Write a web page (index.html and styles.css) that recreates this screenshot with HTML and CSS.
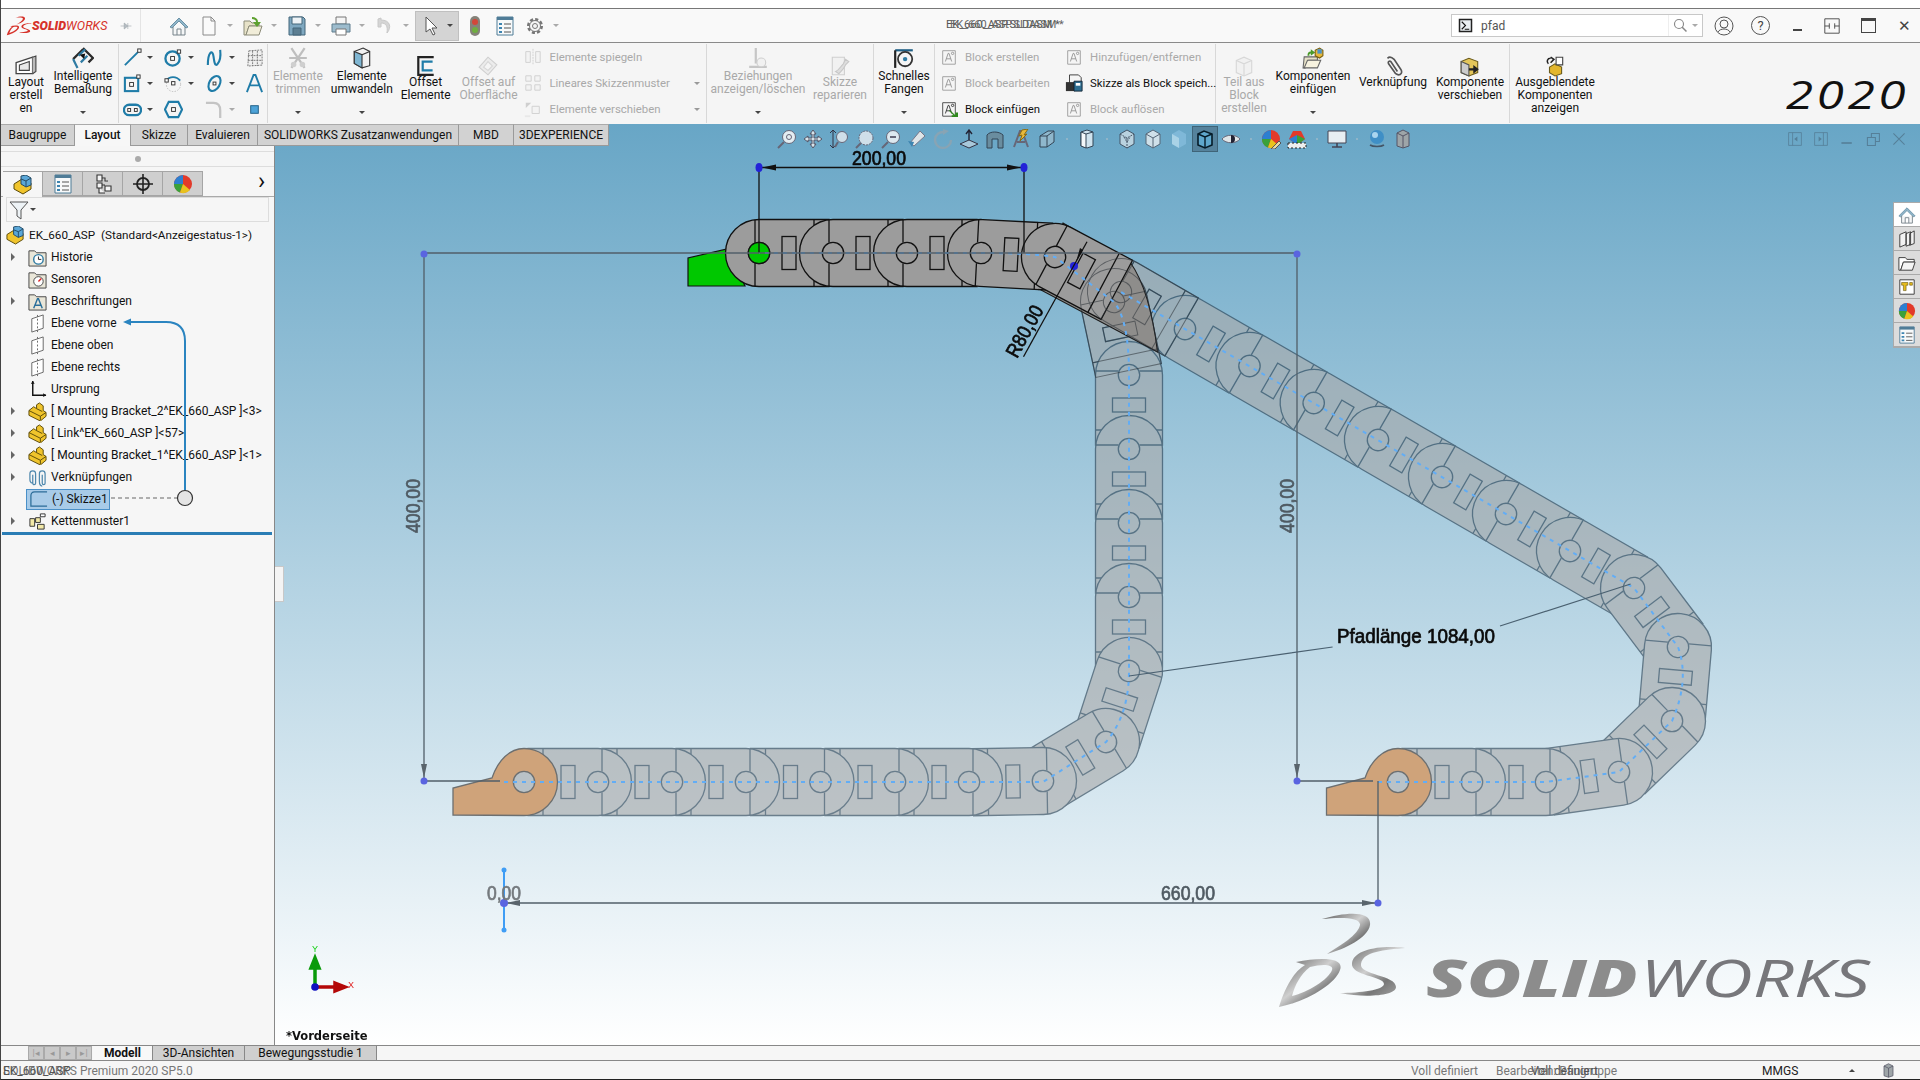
FILE: index.html
```html
<!DOCTYPE html>
<html lang="de">
<head>
    <meta charset="UTF-8">
    <title>SOLIDWORKS Premium 2020 - EK_660_ASP</title>
    <link rel="stylesheet" href="styles.css">
</head>
<body>
    <!-- icon library -->
    <svg class="defs" width="0" height="0">
        <defs>
            <linearGradient id="chrome" x1="0" y1="0" x2="1" y2="1">
                <stop offset="0" stop-color="#5a5a5a"/>
                <stop offset=".45" stop-color="#cfcfcf"/>
                <stop offset=".7" stop-color="#777"/>
                <stop offset="1" stop-color="#aaa"/>
            </linearGradient>
            <symbol id="ds" viewBox="1275 912 135 98">
                <path d="M1322 919C1345 912 1372 910 1370 925C1368 938 1345 949 1327 954C1341 945 1358 935 1360 925C1361 917 1340 917 1322 919Z"/>
                <path fill-rule="evenodd" d="M1296 962C1320 957 1345 957 1340 970C1335 985 1305 1002 1279 1007C1284 990 1293 972 1305 965C1302 964 1299 963 1296 962ZM1310 967C1300 975 1295 985 1292 996C1308 992 1328 980 1332 970C1334 964 1322 964 1310 967Z"/>
                <path d="M1405 948C1385 950 1363 951 1361 964C1359 975 1396 975 1396 987C1396 996 1365 998 1340 993C1360 993 1384 990 1384 984C1384 976 1350 976 1352 963C1354 948 1385 945 1405 948Z"/>
            </symbol>
            <symbol id="i-pin" viewBox="0 0 20 20"><path d="M1 10h6M7 5l6 5-6 5zM13 5v10M13 10h6" fill="#b5bcc2" stroke="#9aa2a8"/></symbol>
            <symbol id="i-home" viewBox="0 0 20 20"><path d="M1 11l9-9 9 9-2 1-7-7-7 7z" fill="#8fb5c9" stroke="#6c93a8"/><path d="M4 11v8h12v-8M8 19v-6h4v6" fill="#f4f6f7" stroke="#77838a"/></symbol>
            <symbol id="i-new" viewBox="0 0 20 20"><path d="M4 1h8l4 4v14H4z" fill="#fafafa" stroke="#8a8a8a"/><path d="M12 1v4h4" fill="none" stroke="#8a8a8a"/></symbol>
            <symbol id="i-open" viewBox="0 0 20 20"><path d="M1 5h6l2 2h7v3H6l-3 9H1z" fill="#e7e2c8" stroke="#8b8b78"/><path d="M6 10h13l-3 9H3z" fill="#f1edd9" stroke="#8b8b78"/><path d="M9 1c4 0 6 2 6 5h3l-4 5-4-5h3c0-2-2-3-4-3z" fill="#5da02e"/></symbol>
            <symbol id="i-save" viewBox="0 0 20 20"><path d="M2 1h14l2 2v16H2z" fill="#7fa8c0" stroke="#44667a"/><path d="M5 1h10v7H5z" fill="#eef3f6" stroke="#44667a"/><path d="M6 12h8v7H6z" fill="#5d7f92" stroke="#44667a"/></symbol>
            <symbol id="i-print" viewBox="0 0 20 20"><path d="M5 1h10v7H5z" fill="#f5f5f5" stroke="#777"/><path d="M1 8h18v8H1z" fill="#9dbccd" stroke="#5f7d8d"/><path d="M5 13h10v6H5z" fill="#fff" stroke="#777"/></symbol>
            <symbol id="i-undo" viewBox="0 0 20 20"><path d="M3 3v8h3V7c5 0 7 3 6 10 5-6 3-13-6-13V2z" fill="#d5d5d5" stroke="#c8c8c8"/></symbol>
            <symbol id="i-cursor" viewBox="0 0 20 20"><path d="M5 1v15l4-3 3 6 2-1-3-6h5z" fill="#fff" stroke="#555"/></symbol>
            <symbol id="i-light" viewBox="0 0 20 20"><rect x="5" y="0" width="10" height="20" rx="5" fill="#85837a"/><circle cx="10" cy="6" r="3" fill="#d2473a"/><circle cx="10" cy="14" r="3" fill="#6fae3f"/></symbol>
            <symbol id="i-list" viewBox="0 0 20 20"><path d="M2 1h16v18H2z" fill="#f7f9fa" stroke="#4f7c97"/><path d="M2 1h16v3H2z" fill="#4f7c97"/><path d="M4 7h3v2H4zM4 11h3v2H4zM4 15h3v2H4z" fill="#3d84b0"/><path d="M9 8h7M9 12h7M9 16h7" stroke="#555"/></symbol>
            <symbol id="i-gear" viewBox="0 0 20 20"><circle cx="10" cy="10" r="6.5" fill="none" stroke="#777" stroke-width="3" stroke-dasharray="3 2"/><circle cx="10" cy="10" r="5.500" fill="#f5f5f5" stroke="#777"/><circle cx="10" cy="10" r="2.500" fill="none" stroke="#777"/></symbol>
            <symbol id="i-layout" viewBox="0 0 20 20"><path d="M1 7l15-5v15H1z" fill="#fff" stroke="#444" stroke-width="1.2"/><path d="M4 9l9-3v8H4z" fill="#e9e9e9" stroke="#444"/><path d="M16 2l3-1v14l-3 2" fill="#bbb" stroke="#444"/></symbol>
            <symbol id="i-dim" viewBox="0 0 20 20"><path d="M1 11l9-9M10 1l9 9-4 4" fill="none" stroke="#2b2b2b" stroke-width="2"/><path d="M6 8l6-6M8 14l6-6" stroke="#2f7ba3" stroke-width="2"/><path d="M7 7l5-1-1 5z" fill="#111"/><path d="M1 11l4 8" stroke="#2f7ba3" stroke-width="2"/></symbol>
            <symbol id="i-line" viewBox="0 0 20 20"><path d="M2 18L16 4" stroke="#1f7ca8" stroke-width="2"/><rect x="15.500" y="1" width="3.500" height="3.500" fill="#fff" stroke="#333"/></symbol>
            <symbol id="i-circle" viewBox="0 0 20 20"><circle cx="9" cy="11" r="7.500" fill="none" stroke="#1f7ca8" stroke-width="2.400"/><rect x="7" y="9" width="4" height="4" fill="#fff" stroke="#333"/><rect x="14" y="2" width="3.500" height="3.500" fill="#fff" stroke="#333"/></symbol>
            <symbol id="i-spline" viewBox="0 0 20 20"><path d="M3 18C3 4 8 1 9 9s2 10 4 8 4-6 3-15" fill="none" stroke="#1f7ca8" stroke-width="2.200"/></symbol>
            <symbol id="i-grid" viewBox="0 0 20 20"><path d="M4 3l14-1v16L3 19zM8 3v16M13 3v16M3 8h15M3 13h15" fill="#efefef" stroke="#777" stroke-dasharray="2 1"/></symbol>
            <symbol id="i-rect" viewBox="0 0 20 20"><rect x="2" y="4" width="14" height="14" fill="none" stroke="#1f7ca8" stroke-width="2.200"/><rect x="7" y="9" width="4" height="4" fill="#fff" stroke="#333"/><rect x="14.500" y="1" width="3.500" height="3.500" fill="#fff" stroke="#333"/></symbol>
            <symbol id="i-arc" viewBox="0 0 20 20"><circle cx="10" cy="11" r="7.500" fill="none" stroke="#bbb" stroke-dasharray="1.500 1.500"/><path d="M2 7C6 2 13 2 17 7" fill="none" stroke="#1f7ca8" stroke-width="2"/><rect x="1" y="5" width="3.500" height="3.500" fill="#fff" stroke="#333"/><rect x="8" y="8" width="3.500" height="3.500" fill="#fff" stroke="#333"/></symbol>
            <symbol id="i-ellipse" viewBox="0 0 20 20"><ellipse cx="10" cy="10" rx="5.500" ry="8.500" transform="rotate(30 10 10)" fill="none" stroke="#1f7ca8" stroke-width="2.200"/><rect x="8.500" y="8.500" width="3" height="3" fill="#fff" stroke="#333"/></symbol>
            <symbol id="i-text" viewBox="0 0 20 20"><path d="M2 19L9 1h2l7 18M5 12h10" fill="none" stroke="#1f7ca8" stroke-width="2"/></symbol>
            <symbol id="i-slot" viewBox="0 0 20 20"><rect x="1" y="5" width="18" height="11" rx="5.500" fill="none" stroke="#1f7ca8" stroke-width="2.400"/><rect x="5" y="9" width="3" height="3" fill="#fff" stroke="#333"/><rect x="12" y="9" width="3" height="3" fill="#fff" stroke="#333"/></symbol>
            <symbol id="i-poly" viewBox="0 0 20 20"><path d="M5 2h10l4 8-4 8H5l-4-8z" fill="none" stroke="#1f7ca8" stroke-width="2.200"/><rect x="8" y="8" width="4" height="4" fill="#fff" stroke="#333"/></symbol>
            <symbol id="i-fillet" viewBox="0 0 20 20"><path d="M1 3h8c5 0 7 3 7 8v8" fill="none" stroke="#c4c4c4" stroke-width="2.400"/></symbol>
            <symbol id="i-point" viewBox="0 0 20 20"><rect x="6" y="6" width="8" height="8" fill="#4da3d8" stroke="#1f5f86"/></symbol>
            <symbol id="i-trim" viewBox="0 0 20 20"><path d="M4 1l12 18M16 1L4 19M2 10h16" stroke="#888" stroke-width="2"/><circle cx="6" cy="16" r="2.500" fill="#aaa"/><circle cx="14" cy="16" r="2.500" fill="#aaa"/></symbol>
            <symbol id="i-convert" viewBox="0 0 20 20"><path d="M3 4l8-3 6 3v13l-7 2-7-4z" fill="#f2f2f2" stroke="#333"/><path d="M3 4l7 3v12l-7-4z" fill="#7fb6d2" stroke="#333"/><path d="M10 7l7-3" stroke="#333"/></symbol>
            <symbol id="i-offset" viewBox="0 0 20 20"><path d="M17 2H3v16h14" fill="none" stroke="#222" stroke-width="2"/><path d="M16 6H7v8h9" fill="none" stroke="#1f7ca8" stroke-width="2"/></symbol>
            <symbol id="i-offsurf" viewBox="0 0 20 20"><path d="M2 11l8-9 8 7-8 9z" fill="#e4e4e4" stroke="#aaa"/><path d="M6 11l4-5 4 4-4 4z" fill="#f6f6f6" stroke="#bbb"/></symbol>
            <symbol id="i-mirror" viewBox="0 0 20 20"><path d="M10 1v18" stroke="#aaa" stroke-dasharray="2 1"/><path d="M2 4h5v12H2zM13 4h5v12h-5z" fill="#f2f2f2" stroke="#aaa"/></symbol>
            <symbol id="i-pattern" viewBox="0 0 20 20"><path d="M2 2h6v6H2zM12 2h6v6h-6zM2 12h6v6H2zM12 12h6v6h-6z" fill="#f2f2f2" stroke="#aaa"/></symbol>
            <symbol id="i-move" viewBox="0 0 20 20"><path d="M9 7h8v8H9z" fill="#f2f2f2" stroke="#aaa"/><path d="M2 3h6L2 9z" fill="#aaa"/><path d="M1 17h6v2H1z" fill="#ddd"/></symbol>
            <symbol id="i-rel" viewBox="0 0 20 20"><path d="M8 1v14M2 18h16" stroke="#999" stroke-width="2"/><circle cx="13" cy="14" r="4" fill="#eee" stroke="#aaa"/></symbol>
            <symbol id="i-repair" viewBox="0 0 20 20"><path d="M3 2h11v16H3z" fill="#efefef" stroke="#aaa"/><path d="M6 15c3-1 4-4 7-7l2-4 3 2-3 3c-1 3-4 6-6 8z" fill="#c8c8c8" stroke="#999"/></symbol>
            <symbol id="i-snap" viewBox="0 0 20 20"><path d="M2 3h16" stroke="#1f5f86" stroke-width="2"/><path d="M2 3v16" stroke="#222" stroke-width="2"/><circle cx="11" cy="11" r="6.500" fill="none" stroke="#333" stroke-width="1.600"/><circle cx="11" cy="11" r="2" fill="#2f7ba3"/></symbol>
            <symbol id="i-block" viewBox="0 0 20 20"><path d="M3 3h14v15H3z" fill="#f5f5f5" stroke="#444"/><path d="M6 15l3-9h1l3 9M7 12h5" fill="none" stroke="#333"/><circle cx="14" cy="6" r="1.300" fill="none" stroke="#333"/></symbol>
            <symbol id="i-blockin" viewBox="0 0 20 20"><use href="#i-block"/><path d="M11 11l6 6v-3h3v5h-7v-2h2l-5-5z" fill="#2f8a1d"/></symbol>
            <symbol id="i-blocksave" viewBox="0 0 20 20"><path d="M5 1h10l3 3v8H5z" fill="#f5f5f5" stroke="#333"/><path d="M1 9h10v10H1z" fill="#333"/><path d="M10 8h9v11h-9z" fill="#2f6f92" stroke="#123"/><path d="M12 10h5v3h-5z" fill="#fff"/></symbol>
            <symbol id="i-teil" viewBox="0 0 20 20"><path d="M3 5l7-3 7 3v11l-7 3-7-3z" fill="#eee" stroke="#bbb"/><path d="M3 5l7 3 7-3M10 8v11" fill="none" stroke="#bbb"/></symbol>
            <symbol id="i-insert" viewBox="0 0 20 20"><path d="M2 9h12v3H6l-3 7H1z" fill="#e7e2c8" stroke="#666"/><path d="M5 12h12l-3 7H2z" fill="#f6f2df" stroke="#666"/><path d="M5 8c0-3 1-4 3-4V2l4 3-4 3V6c-1 0-2 1-1 2z" fill="#4a9a2a"/><path d="M12 3l4-2 3 2v5l-3 2-4-2z" fill="#e6b83a" stroke="#7a6010"/><path d="M14 2h4v4h-4z" fill="#4d92c4"/></symbol>
            <symbol id="i-clip" viewBox="0 0 20 20"><path d="M5 3c2-2 4-1 6 1l6 9c2 3 0 5-2 5s-3-1-4-3L6 8c-1-2 1-3 2-2l6 9" fill="none" stroke="#555" stroke-width="1.500"/></symbol>
            <symbol id="i-movecomp" viewBox="0 0 20 20"><path d="M2 6l7-3 8 3v10l-8 3-7-3z" fill="#e4c65a" stroke="#6b5c1d"/><path d="M2 6l7 3v10l-7-3z" fill="#ccc" stroke="#555"/><path d="M9 12h4V9l5 4-5 4v-3H9z" fill="#222"/></symbol>
            <symbol id="i-hidden" viewBox="0 0 20 20"><path d="M5 11l5-3 6 3v6l-6 2-5-3z" fill="#e2b62e" stroke="#6b5c1d"/><path d="M6 2l3 2-3 3M14 3c2 1 3 3 2 5M4 8C2 6 3 3 6 3" fill="none" stroke="#222" stroke-width="1.400"/><path d="M11 2h6v7h-6z" fill="#fff" stroke="#444"/></symbol>
            <symbol id="i-search" viewBox="0 0 20 20"><circle cx="8" cy="8" r="6" fill="none" stroke="#888" stroke-width="1.500"/><path d="M12 12l6 6" stroke="#888" stroke-width="2"/></symbol>
            <symbol id="i-prompt" viewBox="0 0 20 20"><rect x="1" y="1" width="18" height="18" fill="#222"/><rect x="3" y="3" width="14" height="14" fill="#e9eef2"/><path d="M5 5l5 5-5 5M9 15h6" fill="none" stroke="#111" stroke-width="1.500"/></symbol>
            <symbol id="i-user" viewBox="0 0 20 20"><circle cx="10" cy="10" r="9" fill="none" stroke="#555"/><circle cx="10" cy="8" r="4" fill="none" stroke="#555"/><path d="M4 16c2-4 10-4 12 0" fill="none" stroke="#555"/></symbol>
            <symbol id="i-splitwin" viewBox="0 0 20 20"><path d="M2 2h16v16H2zM2 10h5M18 10h-5M7 7v6M13 7v6" fill="none" stroke="#444"/></symbol>
            <symbol id="i-zoomfit" viewBox="0 0 20 20"><circle cx="12" cy="8" r="6.500" fill="#e4edf2" stroke="#667"/><circle cx="12" cy="8" r="2.500" fill="none" stroke="#667"/><path d="M7 13l-6 6" stroke="#667" stroke-width="2"/></symbol>
            <symbol id="i-zoomarea" viewBox="0 0 20 20"><circle cx="11" cy="9" r="7" fill="#cfdfe9" stroke="#667" stroke-dasharray="2 1"/><path d="M6 14l-5 5" stroke="#667" stroke-width="2"/></symbol>
            <symbol id="i-zoomin" viewBox="0 0 20 20"><path d="M4 1v18M1 4l3-3 3 3M1 16l3 3 3-3" fill="none" stroke="#334"/><circle cx="13" cy="8" r="5.500" fill="#cfdfe9" stroke="#667"/><path d="M9 13l-3 5" stroke="#667" stroke-width="2"/></symbol>
            <symbol id="i-pan" viewBox="0 0 20 20"><path d="M10 1l3 4h-2v4h4V7l4 3-4 3v-2h-4v4h2l-3 4-3-4h2v-4H5v2l-4-3 4-3v2h4V5H7z" fill="#d6e3ea" stroke="#556"/></symbol>
            <symbol id="i-section" viewBox="0 0 20 20"><circle cx="12" cy="8" r="6.500" fill="#dde8ef" stroke="#667"/><path d="M9 8h6" stroke="#667" stroke-width="2"/><path d="M7 13l-6 6" stroke="#667" stroke-width="2"/></symbol>
            <symbol id="i-flash" viewBox="0 0 20 20"><path d="M3 14L13 2l5 5L7 17z" fill="#dfe5e8" stroke="#778"/><path d="M1 12l6 1-2 5z" fill="#3d84b0"/></symbol>
            <symbol id="i-rotate" viewBox="0 0 20 20"><path d="M11 3a8 8 0 1 0 7 8" fill="none" stroke="#88a4b4" stroke-width="2.400"/><path d="M10 0l6 2-6 4z" fill="#88a4b4"/></symbol>
            <symbol id="i-normal" viewBox="0 0 20 20"><path d="M10 2v12M7 5l3-4 3 4" fill="none" stroke="#223" stroke-width="1.400"/><path d="M1 15l9-4 9 4-9 4z" fill="#a8c8da" stroke="#334"/></symbol>
            <symbol id="i-cut" viewBox="0 0 20 20"><path d="M2 6c3-4 12-4 16 0v13h-5V10H7v9H2z" fill="#6a8d9f" stroke="#345"/></symbol>
            <symbol id="i-bolt" viewBox="0 0 20 20"><path d="M3 18L9 2h2l6 16M6 13h8" fill="none" stroke="#667" stroke-width="2"/><path d="M11 1l6-1-4 6 3-1-7 7 2-6-3 1z" fill="#e6b83a" stroke="#8a6a10"/></symbol>
            <symbol id="i-views" viewBox="0 0 20 20"><path d="M3 7l8-5h6v11l-7 5H3z" fill="#8fb7cc" stroke="#345"/><path d="M3 7h7v11M10 7l7-5" fill="none" stroke="#345"/></symbol>
            <symbol id="i-box" viewBox="0 0 20 20"><path d="M4 3l6-2 6 2v14l-6 2-6-2z" fill="#cfe3ee" stroke="#345"/><path d="M4 3l5 2v14l-5-2z" fill="#f4f8fa" stroke="#345"/><path d="M9 5l7-2" stroke="#345"/></symbol>
            <symbol id="i-hlr" viewBox="0 0 20 20"><path d="M3 5l7-4 7 4v10l-7 4-7-4z" fill="#b9d2df" stroke="#456"/><path d="M3 5l7 4 7-4M10 9v10M7 8l3 5 3-5" fill="none" stroke="#456" stroke-dasharray="2 1"/></symbol>
            <symbol id="i-wire" viewBox="0 0 20 20"><path d="M3 5l7-4 7 4v10l-7 4-7-4z" fill="#cfe0e9" stroke="#567"/><path d="M3 5l7 4 7-4M10 9v10" fill="none" stroke="#567"/></symbol>
            <symbol id="i-solid" viewBox="0 0 20 20"><path d="M3 5l7-4 7 4v10l-7 4-7-4z" fill="#7fb8d8"/><path d="M3 5l7 4v10l-7-4z" fill="#a9d2e6"/></symbol>
            <symbol id="i-shade" viewBox="0 0 20 20"><path d="M3 5l6-3 8 3v11l-7 3-7-3z" fill="#5fa7cc" stroke="#061c28" stroke-width="1.600"/><path d="M3 5l7 3 7-3M10 8v11" fill="none" stroke="#061c28" stroke-width="1.400"/></symbol>
            <symbol id="i-eye" viewBox="0 0 20 20"><path d="M1 10c4-5 14-5 18 0-4 5-14 5-18 0z" fill="#dfe5e8" stroke="#667"/><path d="M10 6a4 4 0 0 1 0 8z" fill="#223"/></symbol>
            <symbol id="i-palette" viewBox="0 0 20 20"><circle cx="10" cy="10" r="9" fill="#e23a2a"/><path d="M10 10L1 10a9 9 0 0 0 6 8.500z" fill="#3aa13a"/><path d="M10 10l-3 8.500a9 9 0 0 0 10-2.500z" fill="#e8c21e"/><path d="M10 10L1 10a9 9 0 0 1 9-9z" fill="#2d7fd0"/></symbol>
            <symbol id="i-paint" viewBox="0 0 20 20"><use href="#i-palette"/><path d="M10 20l8-8 2 2-6 6z" fill="#e8d8a0" stroke="#555"/></symbol>
            <symbol id="i-scene" viewBox="0 0 20 20"><path d="M6 2l8 0 4 8-8 6-8-6z" fill="#e23a2a"/><path d="M2 10l8 6V6z" fill="#2d7fd0"/><path d="M10 6l8 4-8 6z" fill="#3aa13a"/><path d="M1 14h18v5H1z" fill="#eee" stroke="#222" stroke-dasharray="2 2"/></symbol>
            <symbol id="i-monitor" viewBox="0 0 20 20"><path d="M1 2h18v12H1z" fill="#e7eef2" stroke="#445"/><path d="M10 14v4M5 18h10" stroke="#445" stroke-width="1.600"/></symbol>
            <symbol id="i-globe" viewBox="0 0 20 20"><circle cx="10" cy="8" r="7" fill="#3f8fc6"/><circle cx="8" cy="6" r="3" fill="#a9d5ef"/><path d="M3 16c3 2 11 2 14 0" fill="none" stroke="#456" stroke-width="1.600"/></symbol>
            <symbol id="i-cyl" viewBox="0 0 20 20"><path d="M4 4l6-3 6 3v13l-6 2-6-2z" fill="#9ea5a8" stroke="#556"/><path d="M4 4l6 3 6-3M10 7v12" fill="none" stroke="#556"/></symbol>
            <symbol id="i-prevwin" viewBox="0 0 20 20"><path d="M2 2h16v16H2zM7 2v16" fill="none" stroke="#557f98"/><path d="M13 7v6l-4-3z" fill="#557f98"/></symbol>
            <symbol id="i-nextwin" viewBox="0 0 20 20"><path d="M2 2h16v16H2zM13 2v16" fill="none" stroke="#557f98"/><path d="M7 7v6l4-3z" fill="#557f98"/></symbol>
            <symbol id="i-winmin" viewBox="0 0 20 20"><path d="M3 15h13" stroke="#557f98" stroke-width="2"/></symbol>
            <symbol id="i-winmax" viewBox="0 0 20 20"><path d="M3 8h10v10H3zM8 8V3h10v10h-5" fill="none" stroke="#557f98" stroke-width="1.300"/></symbol>
            <symbol id="i-winx" viewBox="0 0 20 20"><path d="M3 3l14 14M17 3L3 17" stroke="#557f98" stroke-width="1.300"/></symbol>
            <symbol id="i-filter" viewBox="0 0 20 20"><path d="M1 2h18l-7 8v9l-4-3v-6z" fill="#eef3f6" stroke="#555"/></symbol>
            <symbol id="i-part" viewBox="0 0 20 20"><path d="M1 9l5-4 3 2V3l3-2 4 3v5l3 2v4l-6 5-12-6z" fill="#f0c42c" stroke="#5b4a08"/><path d="M1 9l12 6v4M13 15l6-4M9 7l6 3" fill="none" stroke="#5b4a08"/></symbol>
            <symbol id="i-asm" viewBox="0 0 20 20"><path d="M1 9l8-5 9 4v6l-8 5-9-5z" fill="#f0c42c" stroke="#5b4a08"/><path d="M8 1l5-1 5 3v7l-5 2-5-3z" fill="#5aa7d8" stroke="#244b66"/><path d="M8 4l5 2 5-3M13 6v6" fill="none" stroke="#244b66"/></symbol>
            <symbol id="i-cfg" viewBox="0 0 20 20"><path d="M4 1h5v6H4zM12 12h6v5h-6zM4 9h5v5H4zM6 14v5h6M9 4h3v3h3M9 11h3" fill="#f4f4f4" stroke="#333" stroke-width="1.100"/></symbol>
            <symbol id="i-target" viewBox="0 0 20 20"><circle cx="10" cy="10" r="6" fill="none" stroke="#222" stroke-width="1.800"/><path d="M10 0v20M0 10h20" stroke="#222" stroke-width="1.600"/></symbol>
            <symbol id="i-hist" viewBox="0 0 20 20"><path d="M1 3h6l2 2h10v14H1z" fill="#e9e6d8" stroke="#444"/><circle cx="11" cy="12" r="5" fill="#fff" stroke="#2f7ba3" stroke-width="1.500"/><path d="M11 9v3h3" fill="none" stroke="#222"/></symbol>
            <symbol id="i-sens" viewBox="0 0 20 20"><path d="M1 3h6l2 2h10v14H1z" fill="#e9e6d8" stroke="#444"/><circle cx="11" cy="12" r="5" fill="#fff" stroke="#444"/><path d="M11 12l3-3" stroke="#d22" stroke-width="1.500"/></symbol>
            <symbol id="i-annot" viewBox="0 0 20 20"><path d="M1 3h6l2 2h10v14H1z" fill="#e9e6d8" stroke="#444"/><path d="M6 17l4-10h1l4 10M7.500 14h6" fill="none" stroke="#2a6f9a" stroke-width="1.500"/></symbol>
            <symbol id="i-plane" viewBox="0 0 20 20"><path d="M4 5l12-4v14L4 19z" fill="#fff" stroke="#666"/><path d="M10 1v18" stroke="#666" stroke-dasharray="2 2"/></symbol>
            <symbol id="i-origin" viewBox="0 0 20 20"><path d="M5 1v15h14" fill="none" stroke="#111" stroke-width="1.500"/><path d="M3 4l2-3 2 3zM16 14l3 2-3 2z" fill="#111"/></symbol>
            <symbol id="i-mates" viewBox="0 0 20 20"><path d="M5 16c-3 0-3-3-3-5V6c0-4 6-4 6 0v10c0 2-3 2-3 0V7" fill="none" stroke="#4f88ad" stroke-width="1.300"/><path d="M15 19c-3 0-3-3-3-5V6c0-4 6-4 6 0v10c0 2-3 2-3 0V7" fill="none" stroke="#4f88ad" stroke-width="1.300"/></symbol>
            <symbol id="i-sketch" viewBox="0 0 20 20"><path d="M19 2H6C3 2 2 4 2 6v11h17" fill="#a8cbe8" stroke="#2b6c98" stroke-width="1.300"/></symbol>
            <symbol id="i-chain" viewBox="0 0 20 20"><path d="M8 6h5v5H8zM2 7h5v8H2zM10 13h7v5h-7z" fill="#f2e9a8" stroke="#333"/><path d="M13 2h5v3h-5z" fill="#fff" stroke="#333"/></symbol>
            <symbol id="i-folder" viewBox="0 0 20 20"><path d="M1 4h7l2 2h8v3H6l-3 9H1z" fill="#fff" stroke="#333"/><path d="M6 9h13l-3 9H3z" fill="#f5f5f5" stroke="#333"/></symbol>
            <symbol id="i-lib" viewBox="0 0 20 20"><path d="M2 5l7-3v14l-7 3zM9 4l5-2v14l-5 2zM13 4l5-3v14l-5 2z" fill="#f2f2f2" stroke="#333"/></symbol>
            <symbol id="i-appear" viewBox="0 0 20 20"><path d="M2 2h16v16H2z" fill="#fff" stroke="#333"/><path d="M4 5h7v3H9v6H6V8H4zM13 5h3v3h-3z" fill="#e6bc1e" stroke="#5b4a08" stroke-width=".6"/></symbol>

            <!-- one chain link, hole at the origin, body toward -x -->
            <g id="link">
                <path d="M-70-33.500H0A33.500 33.500 0 0 1 0 33.500H-70Z"/>
                <path d="M4-33.300V-10.500M4 10.500V33.300M-55-33.500V33.500"/>
                <rect x="-37" y="-16.500" width="14" height="33" fill="none"/>
                <circle r="10.700" fill="none"/>
            </g>
        </defs>
    </svg>

    <div class="app">
        <div class="topgap"></div>

        <header class="titlebar">
            <div class="brand">
                <svg class="brand-mark"><use href="#ds"/></svg>
                <span class="brand-name"><b>SOLID</b>WORKS</span>
                <svg class="ic-pin"><use href="#i-pin"/></svg>
            </div>
            <div class="quick">
                <svg class="qi"><use href="#i-home"/></svg>
                <span class="qa"><svg class="qi"><use href="#i-new"/></svg><i class="caret lite"></i></span>
                <span class="qa"><svg class="qi"><use href="#i-open"/></svg><i class="caret lite"></i></span>
                <span class="qa"><svg class="qi"><use href="#i-save"/></svg><i class="caret lite"></i></span>
                <span class="qa"><svg class="qi"><use href="#i-print"/></svg><i class="caret lite"></i></span>
                <span class="qa"><svg class="qi"><use href="#i-undo"/></svg><i class="caret lite"></i></span>
                <span class="qa pick"><svg class="qi"><use href="#i-cursor"/></svg><i class="caret"></i></span>
                <svg class="qi"><use href="#i-light"/></svg>
                <svg class="qi"><use href="#i-list"/></svg>
                <span class="qa"><svg class="qi"><use href="#i-gear"/></svg><i class="caret lite"></i></span>
            </div>
            <div class="doc-title"><span>EK_660_ASP.SLDASM *</span><span class="ghost">EK_660_ASP.SLDASM *</span></div>
            <div class="search">
                <svg class="search-prompt"><use href="#i-prompt"/></svg>
                <span class="search-text">pfad</span>
                <span class="search-btn"><svg class="search-ic"><use href="#i-search"/></svg><i class="caret lite"></i></span>
            </div>
            <div class="winbtns">
                <svg class="wi"><use href="#i-user"/></svg>
                <span class="help">?</span>
                <span class="wmin"></span>
                <svg class="wi small"><use href="#i-splitwin"/></svg>
                <span class="wmax"></span>
                <span class="wclose">✕</span>
            </div>
        </header>

        <section class="ribbon">
            <div class="group g1">
                <div class="rb low w50"><svg class="ri"><use href="#i-layout"/></svg><span>Layout<br>erstell<br>en</span></div>
                <div class="rb w64"><svg class="ri"><use href="#i-dim"/></svg><span>Intelligente<br>Bemaßung</span><i class="caret"></i></div>
            </div>
            <div class="group g2 sketchgrid">
                <div class="st"><svg class="si"><use href="#i-line"/></svg><i class="caret"></i></div>
                <div class="st"><svg class="si"><use href="#i-circle"/></svg><i class="caret"></i></div>
                <div class="st"><svg class="si"><use href="#i-spline"/></svg><i class="caret"></i></div>
                <div class="st"><svg class="si"><use href="#i-grid"/></svg></div>
                <div class="st"><svg class="si"><use href="#i-rect"/></svg><i class="caret"></i></div>
                <div class="st"><svg class="si"><use href="#i-arc"/></svg><i class="caret"></i></div>
                <div class="st"><svg class="si"><use href="#i-ellipse"/></svg><i class="caret"></i></div>
                <div class="st"><svg class="si"><use href="#i-text"/></svg></div>
                <div class="st"><svg class="si"><use href="#i-slot"/></svg><i class="caret"></i></div>
                <div class="st"><svg class="si"><use href="#i-poly"/></svg></div>
                <div class="st"><svg class="si"><use href="#i-fillet"/></svg><i class="caret lite"></i></div>
                <div class="st"><svg class="si"><use href="#i-point"/></svg></div>
            </div>
            <div class="group g3">
                <div class="rb off w58"><svg class="ri"><use href="#i-trim"/></svg><span>Elemente<br>trimmen</span><i class="caret"></i></div>
                <div class="rb w70"><svg class="ri"><use href="#i-convert"/></svg><span>Elemente<br>umwandeln</span><i class="caret"></i></div>
                <div class="rb low w58"><svg class="ri"><use href="#i-offset"/></svg><span>Offset<br>Elemente</span></div>
                <div class="rb low off w68"><svg class="ri"><use href="#i-offsurf"/></svg><span>Offset auf<br>Oberfläche</span></div>
                <div class="list off w184">
                    <div class="li"><svg class="li-ic"><use href="#i-mirror"/></svg><span>Elemente spiegeln</span></div>
                    <div class="li"><svg class="li-ic"><use href="#i-pattern"/></svg><span>Lineares Skizzenmuster</span><i class="caret"></i></div>
                    <div class="li"><svg class="li-ic"><use href="#i-move"/></svg><span>Elemente verschieben</span><i class="caret"></i></div>
                </div>
            </div>
            <div class="group g4">
                <div class="rb off w102"><svg class="ri"><use href="#i-rel"/></svg><span>Beziehungen<br>anzeigen/löschen</span><i class="caret"></i></div>
                <div class="rb low off w62"><svg class="ri"><use href="#i-repair"/></svg><span>Skizze<br>reparieren</span></div>
            </div>
            <div class="group g5">
                <div class="rb w60"><svg class="ri"><use href="#i-snap"/></svg><span>Schnelles<br>Fangen</span><i class="caret"></i></div>
            </div>
            <div class="group g6">
                <div class="list w128 first">
                    <div class="li off"><svg class="li-ic"><use href="#i-block"/></svg><span>Block erstellen</span></div>
                    <div class="li off"><svg class="li-ic"><use href="#i-block"/></svg><span>Block bearbeiten</span></div>
                    <div class="li"><svg class="li-ic"><use href="#i-blockin"/></svg><span>Block einfügen</span></div>
                </div>
                <div class="list w152">
                    <div class="li off"><svg class="li-ic"><use href="#i-block"/></svg><span>Hinzufügen/entfernen</span></div>
                    <div class="li"><svg class="li-ic"><use href="#i-blocksave"/></svg><span>Skizze als Block speich...</span></div>
                    <div class="li off"><svg class="li-ic"><use href="#i-block"/></svg><span>Block auflösen</span></div>
                </div>
            </div>
            <div class="group g7">
                <div class="rb low off w56"><svg class="ri"><use href="#i-teil"/></svg><span>Teil aus<br>Block<br>erstellen</span></div>
                <div class="rb w82"><svg class="ri"><use href="#i-insert"/></svg><span>Komponenten<br>einfügen</span><i class="caret"></i></div>
                <div class="rb low w78"><svg class="ri"><use href="#i-clip"/></svg><span>Verknüpfung</span></div>
                <div class="rb low w76"><svg class="ri"><use href="#i-movecomp"/></svg><span>Komponente<br>verschieben</span></div>
            </div>
            <div class="group g8">
                <div class="rb low w90"><svg class="ri"><use href="#i-hidden"/></svg><span>Ausgeblendete<br>Komponenten<br>anzeigen</span></div>
            </div>
            <div class="year">2020</div>
        </section>

        <main class="workspace">
            <nav class="cmdtabs">
                <span class="ct">Baugruppe</span>
                <span class="ct on">Layout</span>
                <span class="ct">Skizze</span>
                <span class="ct">Evaluieren</span>
                <span class="ct">SOLIDWORKS Zusatzanwendungen</span>
                <span class="ct">MBD</span>
                <span class="ct">3DEXPERIENCE</span>
            </nav>

            <div class="below">
                <aside class="panel">
                    <div class="grip"><i></i></div>
                    <div class="ptabs">
                        <span class="pt on"><svg class="pti"><use href="#i-asm"/></svg></span>
                        <span class="pt"><svg class="pti"><use href="#i-list"/></svg></span>
                        <span class="pt"><svg class="pti"><use href="#i-cfg"/></svg></span>
                        <span class="pt"><svg class="pti"><use href="#i-target"/></svg></span>
                        <span class="pt"><svg class="pti"><use href="#i-palette"/></svg></span>
                        <span class="pt-more">›</span>
                    </div>
                    <div class="filter"><svg class="fi"><use href="#i-filter"/></svg><i class="caret"></i></div>
                    <div class="tree">
                        <div class="row root"><svg class="ti"><use href="#i-asm"/></svg><span>EK_660_ASP&nbsp; (Standard&lt;Anzeigestatus-1&gt;)</span></div>
                        <div class="row"><i class="exp"></i><svg class="ti"><use href="#i-hist"/></svg><span>Historie</span></div>
                        <div class="row"><i class="noexp"></i><svg class="ti"><use href="#i-sens"/></svg><span>Sensoren</span></div>
                        <div class="row"><i class="exp"></i><svg class="ti"><use href="#i-annot"/></svg><span>Beschriftungen</span></div>
                        <div class="row"><i class="noexp"></i><svg class="ti"><use href="#i-plane"/></svg><span>Ebene vorne</span></div>
                        <div class="row"><i class="noexp"></i><svg class="ti"><use href="#i-plane"/></svg><span>Ebene oben</span></div>
                        <div class="row"><i class="noexp"></i><svg class="ti"><use href="#i-plane"/></svg><span>Ebene rechts</span></div>
                        <div class="row"><i class="noexp"></i><svg class="ti"><use href="#i-origin"/></svg><span>Ursprung</span></div>
                        <div class="row"><i class="exp"></i><svg class="ti"><use href="#i-part"/></svg><span>[ Mounting Bracket_2^EK_660_ASP ]&lt;3&gt;</span></div>
                        <div class="row"><i class="exp"></i><svg class="ti"><use href="#i-part"/></svg><span>[ Link^EK_660_ASP ]&lt;57&gt;</span></div>
                        <div class="row"><i class="exp"></i><svg class="ti"><use href="#i-part"/></svg><span>[ Mounting Bracket_1^EK_660_ASP ]&lt;1&gt;</span></div>
                        <div class="row"><i class="exp"></i><svg class="ti"><use href="#i-mates"/></svg><span>Verknüpfungen</span></div>
                        <div class="row"><i class="noexp"></i><span class="sel"><svg class="ti"><use href="#i-sketch"/></svg><span>(-) Skizze1</span></span></div>
                        <div class="row"><i class="exp"></i><svg class="ti"><use href="#i-chain"/></svg><span>Kettenmuster1</span></div>
                        <!-- rollback bar and the callout that lies over the tree -->
                        <div class="rollback"></div>
                        <svg class="tree-note" viewBox="0 0 274 330">
                            <path d="M126 100H165Q184 100 184 119V268" fill="none" stroke="#2a84c0" stroke-width="2"/>
                            <path d="M122 100l8-3.500v7z" fill="#2a84c0"/>
                            <path d="M110 276H176" stroke="#666" stroke-dasharray="4 3"/>
                            <circle cx="184" cy="276" r="7.500" fill="#e4e4e4" stroke="#333" stroke-width="1.200"/>
                        </svg>
                    </div>
                </aside>
                <div class="splitter"></div>
                <div class="viewport">
                    <div class="hud">
                        <svg class="hi"><use href="#i-zoomfit"/></svg>
                        <svg class="hi"><use href="#i-pan"/></svg>
                        <svg class="hi"><use href="#i-zoomin"/></svg>
                        <svg class="hi"><use href="#i-zoomarea"/></svg>
                        <svg class="hi"><use href="#i-section"/></svg>
                        <svg class="hi"><use href="#i-flash"/></svg>
                        <svg class="hi"><use href="#i-rotate"/></svg>
                        <svg class="hi"><use href="#i-normal"/></svg>
                        <svg class="hi"><use href="#i-cut"/></svg>
                        <svg class="hi"><use href="#i-bolt"/></svg>
                        <svg class="hi"><use href="#i-views"/></svg>
                        <i class="hsep"></i>
                        <svg class="hi"><use href="#i-box"/></svg>
                        <i class="hsep"></i>
                        <svg class="hi"><use href="#i-hlr"/></svg>
                        <svg class="hi"><use href="#i-wire"/></svg>
                        <svg class="hi"><use href="#i-solid"/></svg>
                        <span class="hi-on"><svg class="hi"><use href="#i-shade"/></svg></span>
                        <svg class="hi"><use href="#i-eye"/></svg>
                        <i class="hsep"></i>
                        <svg class="hi"><use href="#i-paint"/></svg>
                        <svg class="hi"><use href="#i-scene"/></svg>
                        <i class="hsep"></i>
                        <svg class="hi"><use href="#i-monitor"/></svg>
                        <i class="hsep"></i>
                        <svg class="hi"><use href="#i-globe"/></svg>
                        <svg class="hi"><use href="#i-cyl"/></svg>
                    </div>
                    <div class="winctl">
                        <svg class="wc"><use href="#i-prevwin"/></svg>
                        <svg class="wc"><use href="#i-nextwin"/></svg>
                        <svg class="wc"><use href="#i-winmin"/></svg>
                        <svg class="wc"><use href="#i-winmax"/></svg>
                        <svg class="wc"><use href="#i-winx"/></svg>
                    </div>
                    <div class="taskpane">
                        <span class="tp on"><svg class="tpi"><use href="#i-home"/></svg></span>
                        <span class="tp"><svg class="tpi"><use href="#i-lib"/></svg></span>
                        <span class="tp"><svg class="tpi"><use href="#i-folder"/></svg></span>
                        <span class="tp"><svg class="tpi"><use href="#i-appear"/></svg></span>
                        <span class="tp"><svg class="tpi"><use href="#i-palette"/></svg></span>
                        <span class="tp"><svg class="tpi"><use href="#i-list"/></svg></span>
                    </div>

                    <!-- drawing: coordinates are screen pixels -->
                    <svg class="drawing" viewBox="275 146 1645 899">
                        <g class="chain-soft">
                            <!-- chain from the right bracket, far end first -->
                            <use href="#link" transform="translate(1121 292) rotate(-150)"/>
                            <use href="#link" transform="translate(1185 329) rotate(-150)"/>
                            <use href="#link" transform="translate(1249.500 366) rotate(-150)"/>
                            <use href="#link" transform="translate(1313.700 403) rotate(-150)"/>
                            <use href="#link" transform="translate(1378 440) rotate(-150)"/>
                            <use href="#link" transform="translate(1442 477) rotate(-150)"/>
                            <use href="#link" transform="translate(1506 514) rotate(-150)"/>
                            <use href="#link" transform="translate(1570 551) rotate(-150)"/>
                            <use href="#link" transform="translate(1634 588) rotate(-127)"/>
                            <use href="#link" transform="translate(1678 647) rotate(-85)"/>
                            <use href="#link" transform="translate(1672 721) rotate(-44)"/>
                            <use href="#link" transform="translate(1619 772) rotate(-8)"/>
                            <use href="#link" transform="translate(1546 782)"/>
                            <use href="#link" transform="translate(1472 782)"/>
                        </g>
                        <g class="chain-soft">
                            <!-- chain from the left bracket -->
                            <use href="#link" transform="translate(1114 302) rotate(-102)"/>
                            <use href="#link" transform="translate(1129 375) rotate(-90)"/>
                            <use href="#link" transform="translate(1129 449) rotate(-90)"/>
                            <use href="#link" transform="translate(1129 523) rotate(-90)"/>
                            <use href="#link" transform="translate(1129 597) rotate(-90)"/>
                            <use href="#link" transform="translate(1129 671) rotate(-72)"/>
                            <use href="#link" transform="translate(1106 742) rotate(-31)"/>
                            <use href="#link" transform="translate(1043 781) rotate(-1)"/>
                            <use href="#link" transform="translate(969 782)"/>
                            <use href="#link" transform="translate(895 782)"/>
                            <use href="#link" transform="translate(820.500 782)"/>
                            <use href="#link" transform="translate(746 782)"/>
                            <use href="#link" transform="translate(672 782)"/>
                            <use href="#link" transform="translate(598 782)"/>
                        </g>
                        <!-- brackets -->
                        <path class="bracket" d="M453 815V788L492 778C498 760 510 748.500 524 748.500A33.500 33.500 0 0 1 524 815.500Z"/>
                        <circle class="bracket-hole" cx="524" cy="782" r="10.700"/>
                        <path class="bracket" d="M1326.500 815V788L1365 778C1371 760 1384 748.500 1398 748.500A33.500 33.500 0 0 1 1398 815.500Z"/>
                        <circle class="bracket-hole" cx="1398" cy="782" r="10.700"/>

                        <!-- the active chain, opaque; the far link of it is drawn last -->
                        <path class="green" d="M688 286V258L727 249L745 286Z"/>
                        <path class="chain-dark" d="M1063 223L1130 262Q1150 290 1157.500 352L1041 290Z"/>
                        <g class="chain-hard">
                            <use href="#link" transform="translate(759 253) rotate(180)"/>
                            <use href="#link" transform="translate(833 253) rotate(180)"/>
                            <use href="#link" transform="translate(907 253) rotate(180)"/>
                            <use href="#link" transform="translate(981 253) rotate(-177)"/>
                            <use href="#link" transform="translate(1055 257) rotate(-152)"/>
                        </g>
                        <g class="chain-trace">
                            <use href="#link" transform="translate(1121 292) rotate(-150)"/>
                            <use href="#link" transform="translate(1114 302) rotate(-102)"/>
                        </g>
                        <circle class="green" cx="759" cy="253" r="10.700"/>

                        <!-- construction line of the path -->
                        <path class="spline" d="M504 782H1043L1106 742Q1129 715 1129 671V375Q1129 320 1114 302L1055 257Q1030 253 981 253H759"/>
                        <path class="spline" d="M1378 782H1546L1619 772L1672 721Q1690 680 1678 647L1634 588L1570 551L1121 292"/>

                        <!-- dimensions -->
                        <path class="dim-dark" d="M759 167.500H1024M759 167.500V253M1024 167.500V253"/>
                        <path class="arrow-dark" d="M762 167.500l14-3v6zM1021 167.500l-14-3v6z"/>
                        <path class="dim-mid" d="M424 253H1297M424 253V781M1297 253V781M424 781H500M1297 781H1373M1378 781V903M504 903H1378"/>
                        <path class="arrow-mid" d="M424 778l-3-14h6zM1297 778l-3-14h6zM506 903l14-3v6zM1376 903l-14-3v6z"/>
                        <ellipse class="pt-blue" cx="759" cy="167.500" rx="3.500" ry="4.500"/>
                        <ellipse class="pt-blue" cx="1024" cy="167.500" rx="3.500" ry="4.500"/>
                        <circle class="pt-soft" cx="424" cy="254" r="3.500"/>
                        <circle class="pt-soft" cx="1297" cy="254" r="3.500"/>
                        <circle class="pt-soft" cx="424" cy="781" r="3.500"/>
                        <circle class="pt-soft" cx="1297" cy="781" r="3.500"/>
                        <circle class="pt-soft" cx="1378" cy="903" r="3.500"/>
                        <circle class="pt-blue" cx="1074" cy="266" r="4"/>
                        <path class="dim-dark" d="M1023.500 356.700L1087 241.700"/>
                        <path class="arrow-dark" d="M1076 262l4-14 3 2z"/>
                        <path class="axis-blue" d="M504 870V930"/>
                        <circle class="dot-sky" cx="504" cy="870" r="2.500"/>
                        <circle class="dot-sky" cx="504" cy="930" r="2.500"/>
                        <circle class="pt-soft" cx="504" cy="903" r="4"/>
                        <path class="leader" d="M1332.600 647L1129 676M1500 626L1630.600 584"/>

                        <text class="dim-text hard" x="852" y="165" textLength="54" lengthAdjust="spacingAndGlyphs">200,00</text>
                        <text class="dim-text hard" transform="translate(1017 359) rotate(-61)" textLength="56" lengthAdjust="spacingAndGlyphs">R80,00</text>
                        <text class="dim-text mid" transform="translate(420 533) rotate(-90)" textLength="54" lengthAdjust="spacingAndGlyphs">400,00</text>
                        <text class="dim-text mid" transform="translate(1294 533) rotate(-90)" textLength="54" lengthAdjust="spacingAndGlyphs">400,00</text>
                        <text class="dim-text mid" x="1161" y="900" textLength="54" lengthAdjust="spacingAndGlyphs">660,00</text>
                        <text class="dim-text soft" x="487" y="900" textLength="34" lengthAdjust="spacingAndGlyphs">0,00</text>
                        <text class="dim-text hard" x="1337" y="643" textLength="158" lengthAdjust="spacingAndGlyphs">Pfadlänge 1084,00</text>

                        <!-- triad -->
                        <path class="triad-y" d="M315 987V965M311 968l4-10 4 10z"/>
                        <path class="triad-x" d="M315 987H337M335 983l10 4-10 4z"/>
                        <circle class="triad-o" cx="315" cy="987" r="3.800"/>
                        <text class="triad-label y" x="312" y="952">Y</text>
                        <text class="triad-label x" x="348" y="988">X</text>
                        <text class="view-name" x="286" y="1040">*Vorderseite</text>

                        <!-- logo -->
                        <use href="#ds" x="1275" y="912" width="135" height="98" class="logo-mark"/>
                        <text class="logo solid" x="1426" y="997" textLength="212" lengthAdjust="spacingAndGlyphs">SOLID</text>
                        <text class="logo works" x="1640" y="997" textLength="230" lengthAdjust="spacingAndGlyphs">WORKS</text>
                    </svg>
                </div>
            </div>
        </main>

        <div class="doctabs">
            <div class="navbtns"><i>|◂</i><i>◂</i><i>▸</i><i>▸|</i></div>
            <span class="dt on">Modell</span>
            <span class="dt">3D-Ansichten</span>
            <span class="dt">Bewegungsstudie 1</span>
        </div>

        <footer class="status">
            <span class="st-left"><span>SOLIDWORKS Premium 2020 SP5.0</span><span class="ghost-left">EK_660_ASP</span></span>
            <span class="st-a">Voll definiert</span>
            <span class="st-b"><span>Bearbeiten: Baugruppe</span><span class="ghost-b">Voll definiert</span></span>
            <span class="st-units">MMGS</span>
            <i class="caret up"></i>
            <svg class="st-ic"><use href="#i-cyl"/></svg>
        </footer>
    </div>
</body>
</html>
```
FILE: styles.css
```css
* {
    box-sizing: border-box;
}
body {
    margin: 0;
    background: #fff;
    font-family: Roboto, "Liberation Sans", sans-serif;
    font-size: 12px;
    color: #111;
    overflow: hidden;
}
.defs {
    position: absolute;
}
.app {
    width: 1920px;
    height: 1080px;
    display: flex;
    flex-direction: column;
    border-left: 1px solid #444;
    border-bottom: 1px solid #222;
}
.topgap {
    height: 9px;
    background: #fff;
    border-bottom: 1px solid #777;
}
i {
    font-style: normal;
}
.caret {
    display: inline-block;
    width: 0;
    height: 0;
    border-left: 3px solid transparent;
    border-right: 3px solid transparent;
    border-top: 3.5px solid #444;
}
.caret.lite {
    border-top-color: #aaa;
}
.caret.up {
    border-top: 0;
    border-bottom: 3.5px solid #444;
}

/* title bar */
.titlebar {
    height: 34px;
    display: flex;
    align-items: center;
    background: #f9f9f9;
    border-bottom: 1px solid #8a8a8a;
    position: relative;
}
.brand {
    width: 140px;
    display: flex;
    align-items: center;
    padding-left: 5px;
    border-right: 1px solid #e4e4e4;
    height: 100%;
}
.brand-mark {
    width: 27px;
    height: 20px;
    fill: #d6322a;
    flex: none;
}
.brand-name {
    font-size: 12.5px;
    font-style: italic;
    color: #d6322a;
    width: 85px;
    margin-left: -1px;
    white-space: nowrap;
    flex: none;
}
.brand-name b {
    font-weight: 900;
}
.ic-pin {
    width: 18px;
    height: 12px;
    flex: none;
}
.quick {
    display: flex;
    align-items: center;
    padding-left: 28px;
    gap: 0;
    width: 430px;
}
.qi {
    width: 20px;
    height: 20px;
    margin-right: 10px;
    flex: none;
}
.qa {
    display: flex;
    align-items: center;
    width: 44px;
    flex: none;
}
.qa .qi {
    margin-right: 8px;
}
.qa.pick {
    width: 44px;
    height: 30px;
    background: #d4d4d4;
    border: 1px solid #c0c0c0;
    margin-left: -4px;
    margin-right: 6px;
    padding-left: 5px;
}
.qa.pick .qi {
    margin-right: 6px;
}
.doc-title {
    position: absolute;
    left: 945px;
    top: 9px;
    font-size: 11px;
    color: #555;
    white-space: nowrap;
}
.doc-title .ghost {
    position: absolute;
    left: 4px;
    top: 0;
    color: #666;
}
.search {
    position: absolute;
    left: 1450px;
    top: 5px;
    width: 252px;
    height: 23px;
    background: #fff;
    border: 1px solid #c8c8c8;
    display: flex;
    align-items: center;
    padding-left: 6px;
}
.search-prompt {
    width: 15px;
    height: 15px;
}
.search-text {
    margin-left: 8px;
    flex: 1;
    color: #555;
}
.search-btn {
    width: 34px;
    height: 100%;
    display: flex;
    align-items: center;
    gap: 4px;
    padding-left: 4px;
    border-left: 1px solid #eee;
}
.search-ic {
    width: 15px;
    height: 15px;
}
.winbtns {
    position: absolute;
    left: 1713px;
    top: 0;
    height: 33px;
    display: flex;
    align-items: center;
}
.wi {
    width: 20px;
    height: 20px;
}
.wi.small {
    width: 18px;
    height: 18px;
    margin-left: 21px;
}
.help {
    width: 19px;
    height: 19px;
    border: 1px solid #555;
    border-radius: 50%;
    margin-left: 17px;
    text-align: center;
    line-height: 17px;
    font-size: 13px;
    color: #444;
}
.wmin {
    width: 9px;
    height: 2px;
    background: #444;
    margin: 9px 0 0 23px;
}
.wmax {
    width: 15px;
    height: 15px;
    border: 1px solid #444;
    border-top-width: 3px;
    margin-left: 20px;
}
.wclose {
    margin-left: 22px;
    font-size: 15px;
    color: #444;
}

/* ribbon */
.ribbon {
    height: 81px;
    display: flex;
    background: #f5f5f5;
    position: relative;
}
.group {
    display: flex;
    height: 79px;
    margin-top: 1px;
    border-right: 1px solid #d8d8d8;
}
.g1 { width: 118px; }
.g2 { width: 149px; }
.g3 { width: 439px; padding-left: 1px; }
.g4 { width: 167px; }
.g5 { width: 61px; }
.g6 { width: 281px; }
.g7 { width: 294px; }
.g8 { border-right: 0; }
.rb {
    display: flex;
    flex-direction: column;
    align-items: center;
    text-align: center;
    line-height: 13px;
    padding: 3px 0 9px;
}
.rb.low {
    padding-top: 11px;
}
.rb.low .ri {
    margin-bottom: -1px;
}
.rb .caret {
    margin-top: auto;
}
.off {
    color: #a9a9a9;
}
.off svg {
    opacity: .5;
}
.ri {
    width: 22px;
    height: 22px;
    margin-bottom: 1px;
    flex: none;
}
.w50 { width: 50px; }
.w56 { width: 56px; }
.w58 { width: 58px; }
.w60 { width: 60px; }
.w62 { width: 62px; }
.w64 { width: 64px; }
.w68 { width: 68px; }
.w70 { width: 70px; }
.w76 { width: 76px; }
.w78 { width: 78px; }
.w82 { width: 82px; }
.w90 { width: 90px; }
.w102 { width: 102px; }
.w128 { width: 128px; }
.w152 { width: 152px; }
.w184 { width: 184px; }
.sketchgrid {
    display: grid;
    grid-template-columns: 41px 41px 40px 27px;
    grid-auto-rows: 26px;
    padding-top: 0;
}
.st {
    display: flex;
    align-items: center;
    padding-left: 4px;
    gap: 5px;
}
.si {
    width: 19px;
    height: 19px;
}
.list {
    display: flex;
    flex-direction: column;
    padding: 0 0 0 2px;
    white-space: nowrap;
    font-size: 11.4px;
}
.list.first {
    padding-left: 5px;
}
.li {
    height: 26px;
    display: flex;
    align-items: center;
    position: relative;
}
.li-ic {
    width: 18px;
    height: 18px;
    margin-right: 7px;
    flex: none;
}
.li .caret {
    position: absolute;
    right: 6px;
    top: 12px;
    border-top-color: #999;
}
.year {
    position: absolute;
    left: 1785px;
    top: 31px;
    font-family: "Open Sans", sans-serif;
    font-style: italic;
    font-weight: 400;
    font-size: 39px;
    line-height: 40px;
    letter-spacing: 3px;
    transform: scaleX(1.26);
    transform-origin: left center;
    color: #111;
}

/* work area */
.workspace {
    height: 921px;
    display: flex;
    flex-direction: column;
    position: relative;
    background: linear-gradient(to bottom, #68a6c6 0%, #ffffff 100%);
    width: 1919px;
    flex: none;
}
.cmdtabs {
    height: 22px;
    display: flex;
    flex: none;
    position: relative;
    z-index: 2;
}
.ct {
    background: #d2d2d2;
    border-right: 1px solid #9a9a9a;
    border-bottom: 1px solid #9a9a9a;
    border-top: 1px solid #aaa;
    text-align: center;
    line-height: 20px;
    padding: 0 8px;
    white-space: nowrap;
}
.ct:nth-child(1) { width: 74px; padding: 0; }
.ct:nth-child(2) { width: 56px; padding: 0; }
.ct:nth-child(3) { width: 57px; padding: 0; }
.ct:nth-child(4) { width: 70px; padding: 0; }
.ct:nth-child(5) { width: 201px; padding: 0; }
.ct:nth-child(6) { width: 55px; padding: 0; }
.ct:nth-child(7) { width: 95px; padding: 0; }
.ct.on {
    background: #f7f7f7;
    border-bottom: 0;
    font-weight: 500;
}
.below {
    flex: 1;
    display: flex;
    min-height: 0;
}
.panel {
    width: 274px;
    background: #f6f6f6;
    border-right: 1px solid #888;
    display: flex;
    flex-direction: column;
    position: relative;
    z-index: 2;
}
.grip {
    height: 16px;
    margin-top: 5px;
    border-top: 1px solid #ddd;
    border-bottom: 1px solid #ddd;
    display: flex;
    align-items: center;
    justify-content: center;
}
.grip i {
    width: 6px;
    height: 6px;
    border-radius: 50%;
    background: #aaa;
}
.ptabs {
    height: 26px;
    margin-top: 4px;
    display: flex;
    padding-left: 2px;
    position: relative;
    border-bottom: 1px solid #aaa;
}
.pt {
    width: 40px;
    display: flex;
    align-items: center;
    justify-content: center;
    background: #cfcfcf;
    border: 1px solid #a5a5a5;
    border-left: 0;
}
.pt.on {
    background: #f6f6f6;
    border-bottom: 0;
    height: 26px;
}
.pti {
    width: 20px;
    height: 20px;
}
.pt-more {
    position: absolute;
    left: 257px;
    top: -5px;
    font-size: 24px;
    line-height: 30px;
}
.filter {
    height: 25px;
    margin: 0 5px;
    border: 1px solid #ddd;
    display: flex;
    align-items: center;
    padding-left: 2px;
    gap: 1px;
}
.fi {
    width: 20px;
    height: 20px;
}
.tree {
    position: relative;
    padding-top: 2px;
}
.row {
    height: 22px;
    display: flex;
    align-items: center;
    white-space: nowrap;
    font-size: 12px;
}
.row.root {
    padding-left: 5px;
    font-size: 11.7px;
}
.exp,
.noexp {
    width: 27px;
    flex: none;
    padding-left: 10px;
}
.exp::before {
    content: '';
    display: block;
    width: 0;
    height: 0;
    border-top: 4px solid transparent;
    border-bottom: 4px solid transparent;
    border-left: 4px solid #666;
}
.ti {
    width: 19px;
    height: 19px;
    margin-right: 4px;
    flex: none;
}
.sel {
    display: flex;
    align-items: center;
    background: #a8cbe8;
    border: 1px solid #4a90c8;
    width: 84px;
    height: 21px;
    margin-left: -2px;
    padding-left: 2px;
}
.rollback {
    height: 3px;
    background: #2a7db5;
    margin: 0 2px 0 1px;
    margin-top: 0;
}
.tree-note {
    position: absolute;
    left: 0;
    top: 0;
    width: 274px;
    height: 330px;
    pointer-events: none;
}
.splitter {
    position: absolute;
    left: 274px;
    top: 442px;
    width: 9px;
    height: 36px;
    background: #f4f4f4;
    border: 1px solid #c8c8c8;
    border-left: 0;
    z-index: 3;
}
.viewport {
    flex: 1;
    position: relative;
}

/* things lying over the graphics area */
.hud {
    position: absolute;
    left: 499px;
    top: -22px;
    display: flex;
    align-items: center;
    height: 30px;
    z-index: 2;
}
.hi {
    width: 20px;
    height: 20px;
    margin: 0 3px;
    flex: none;
}
.hi-on {
    display: flex;
    align-items: center;
    justify-content: center;
    width: 26px;
    height: 26px;
    background: #55829c;
    border: 1px solid #3f6478;
    margin: 0 0;
}
.hsep {
    width: 2px;
    height: 2px;
    margin: 0 6px;
    background: #8fb4c8;
    flex: none;
}
.winctl {
    position: absolute;
    right: 13px;
    top: -15px;
    display: flex;
    gap: 10px;
    z-index: 2;
}
.wc {
    width: 16px;
    height: 16px;
}
.taskpane {
    position: absolute;
    right: 0;
    top: 56px;
    width: 27px;
    display: flex;
    flex-direction: column;
    background: #dcdcdc;
    border: 1px solid #aaa;
    border-right: 0;
    z-index: 2;
}
.tp {
    height: 24px;
    display: flex;
    align-items: center;
    justify-content: center;
    border-bottom: 1px solid #aaa;
}
.tp.on {
    background: #fff;
}
.tpi {
    width: 18px;
    height: 18px;
}
.drawing {
    position: absolute;
    left: 0;
    top: 0;
    width: 1645px;
    height: 899px;
}
.chain-soft {
    opacity: .6;
    fill: #a8a8a8;
    stroke: #22384a;
    stroke-width: 1.3;
}
.chain-dark {
    fill: #8e8d8b;
    stroke: #1c1c1c;
    stroke-width: 1.1;
}
.chain-hard {
    fill: #9c9c9c;
    stroke: #111;
    stroke-width: 1.3;
}
.chain-trace {
    fill: none;
    stroke: #2a3036;
    stroke-width: 1;
    opacity: .55;
}
.bracket {
    fill: #cfa37a;
    stroke: #6c6f70;
    stroke-width: 1.3;
}
.bracket-hole {
    fill: #b9c2c7;
    stroke: #6c6f70;
    stroke-width: 1.3;
}
.green {
    fill: #00c800;
    stroke: #111;
    stroke-width: 1.2;
}
.spline {
    fill: none;
    stroke: #62adf5;
    stroke-width: 2;
    stroke-dasharray: 4 5;
}
.dim-dark {
    fill: none;
    stroke: #111;
    stroke-width: 1.3;
}
.arrow-dark {
    fill: #111;
}
.dim-mid {
    fill: none;
    stroke: #515f69;
    stroke-width: 1.3;
}
.arrow-mid {
    fill: #59646c;
}
.pt-blue {
    fill: #2222d8;
}
.pt-soft {
    fill: #5a64e0;
}
.axis-blue {
    stroke: #3f9df5;
    stroke-width: 2;
}
.dot-sky {
    fill: #3f9df5;
}
.leader {
    fill: none;
    stroke: #4a6070;
    stroke-width: 1.2;
}
.dim-text {
    font-family: "Liberation Sans", sans-serif;
    font-size: 20px;
    stroke-width: .7;
}
.dim-text.hard {
    fill: #0a0a0a;
    stroke: #0a0a0a;
}
.dim-text.mid {
    fill: #4f5a62;
    stroke: #4f5a62;
}
.dim-text.soft {
    fill: #74797d;
    stroke: #74797d;
}
.triad-y {
    stroke: #0a9a0a;
    stroke-width: 3.5;
    fill: #0a9a0a;
}
.triad-x {
    stroke: #b40808;
    stroke-width: 3.5;
    fill: #b40808;
}
.triad-o {
    fill: #1010c0;
}
.triad-label {
    font-family: "Liberation Sans", sans-serif;
    font-size: 9px;
}
.triad-label.y {
    fill: #10d010;
}
.triad-label.x {
    fill: #e02020;
}
.view-name {
    font-family: "DejaVu Sans", sans-serif;
    font-weight: 700;
    font-size: 11.5px;
    fill: #111;
}
.logo-mark {
    fill: url(#chrome);
}
.logo {
    font-family: "Open Sans", sans-serif;
    font-size: 52px;
    font-style: italic;
}
.logo.solid {
    font-weight: 800;
    fill: #8c8c8c;
}
.logo.works {
    font-weight: 400;
    fill: #77777b;
}

/* bottom strips */
.doctabs {
    display: flex;
    background: #f6f6f6;
    border-top: 1px solid #888;
    border-bottom: 1px solid #888;
    height: 16px;
    flex: none;
}
.navbtns {
    display: flex;
    margin-left: 27px;
    width: 65px;
}
.navbtns i {
    width: 16px;
    background: #c9c9c9;
    border: 1px solid #aaa;
    color: #999;
    font-size: 9px;
    line-height: 12px;
    text-align: center;
}
.dt {
    background: #cfcfcf;
    border-right: 1px solid #888;
    text-align: center;
    line-height: 14px;
}
.dt:nth-child(2) { width: 60px; background: #f8f8f8; font-weight: 700; }
.dt:nth-child(3) { width: 92px; }
.dt:nth-child(4) { width: 132px; }
.status {
    flex: 1;
    background: #f6f6f6;
    position: relative;
    color: #777;
}
.status > * {
    position: absolute;
    top: 3px;
    white-space: nowrap;
}
.st-left {
    left: 2px;
}
.ghost-left {
    position: absolute;
    left: 0;
    top: 0;
    color: #555;
}
.st-a { left: 1410px; }
.st-b { left: 1495px; }
.ghost-b {
    position: absolute;
    left: 35px;
    top: 0;
    color: #555;
}
.st-units {
    left: 1761px;
    color: #222;
}
.status .caret.up {
    left: 1848px;
    top: 8px;
}
.status .st-ic {
    left: 1880px;
    top: 2px;
    width: 15px;
    height: 15px;
}
```
